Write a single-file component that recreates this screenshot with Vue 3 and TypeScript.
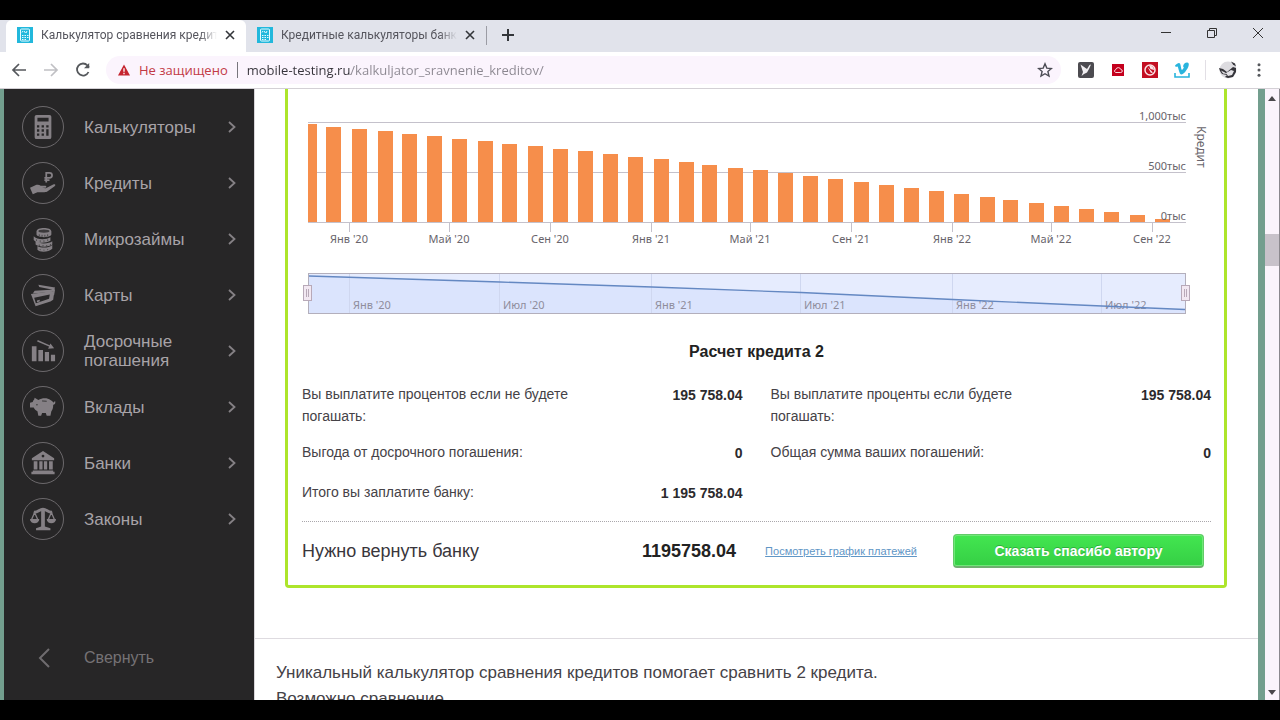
<script setup lang="ts">
import { ref } from 'vue'

interface Tab { title: string; active: boolean }
interface NavItem { label: string; icon: string }
interface Tick { x: number; label: string }
interface Summary { label: string; value: string }

const tabs: Tab[] = [
  { title: 'Калькулятор сравнения кредитов', active: true },
  { title: 'Кредитные калькуляторы банков', active: false },
]

const address = ref('mobile-testing.ru/kalkuljator_sravnenie_kreditov/')

const nav: NavItem[] = [
  { label: 'Калькуляторы', icon: 'calc' },
  { label: 'Кредиты', icon: 'hand' },
  { label: 'Микрозаймы', icon: 'coins' },
  { label: 'Карты', icon: 'cards' },
  { label: 'Досрочные погашения', icon: 'chart' },
  { label: 'Вклады', icon: 'pig' },
  { label: 'Банки', icon: 'bank' },
  { label: 'Законы', icon: 'scales' },
]

const barLefts = [
  326, 352, 378, 402, 427, 452, 478, 502, 528, 553, 578, 603, 628, 654, 679, 702, 728, 753,
  778, 803, 828, 854, 879, 904, 929, 954, 980, 1003, 1029, 1054, 1079, 1104, 1130, 1155,
]
const barTops = [
  127, 129, 131, 134, 136, 139, 141, 144, 146, 149, 151, 154, 157, 159, 162, 165, 168, 170,
  173, 176, 179, 182, 185, 188, 191, 194, 197, 200, 203, 206, 209, 212, 215, 219,
]
const baseline = 222
const bars = [
  { x: 308, y: 124, w: 9 },
  ...barLefts.map((x, i) => ({ x, y: barTops[i], w: 15 })),
]

const axisTicks: Tick[] = [
  { x: 349, label: "Янв '20" },
  { x: 449, label: "Май '20" },
  { x: 550, label: "Сен '20" },
  { x: 651, label: "Янв '21" },
  { x: 750, label: "Май '21" },
  { x: 851, label: "Сен '21" },
  { x: 952, label: "Янв '22" },
  { x: 1051, label: "Май '22" },
  { x: 1152, label: "Сен '22" },
]
const levels = [
  { y: 122, label: '1,000тыс' },
  { y: 172, label: '500тыс' },
  { y: 222, label: '0тыс' },
]
const rangeTicks: Tick[] = [
  { x: 349, label: "Янв '20" },
  { x: 499, label: "Июл '20" },
  { x: 651, label: "Янв '21" },
  { x: 800, label: "Июл '21" },
  { x: 952, label: "Янв '22" },
  { x: 1101, label: "Июл '22" },
]

const summary: Summary[] = [
  { label: 'Вы выплатите процентов если не будете погашать:', value: '195 758.04' },
  { label: 'Вы выплатите проценты если будете погашать:', value: '195 758.04' },
  { label: 'Выгода от досрочного погашения:', value: '0' },
  { label: 'Общая сумма ваших погашений:', value: '0' },
  { label: 'Итого вы заплатите банку:', value: '1 195 758.04' },
]
</script>

<template>
  <div class="window">
    <header class="tabstrip">
      <div v-for="t in tabs" :key="t.title" class="tab" :class="{ active: t.active }">
        <svg class="favicon" viewBox="0 0 16 16" aria-hidden="true">
          <rect width="16" height="16" fill="#22b8dc" />
          <rect x="3.5" y="2" width="9" height="12" rx="1" fill="none" stroke="#e6fbff" />
          <path d="M5 5.500l1-1.500M7 4l1.500 2M10 4l-1 2M5 8.500h1.500M7.500 8.500h1.500M10 8.500h1.500M5 10.500h1.500M7.500 10.500h1.500M10 10.500h1.500M5 12.500h1.500M7.500 12.500h1.500" stroke="#e6fbff" />
        </svg>
        <button class="tab-title">{{ t.title }}</button>
        <button class="tab-close" aria-label="Закрыть вкладку">
          <svg viewBox="0 0 12 12"><path d="M2 2l8 8M10 2l-8 8" stroke="#33363a" stroke-width="1.600" /></svg>
        </button>
      </div>
      <button class="new-tab" aria-label="Новая вкладка">
        <svg viewBox="0 0 12 12"><path d="M6 0v12M0 6h12" stroke="#33363a" stroke-width="2" /></svg>
      </button>
      <div class="win-controls">
        <button aria-label="Свернуть окно">
          <svg viewBox="0 0 12 12"><path d="M1 5.500h10" stroke="#333" /></svg>
        </button>
        <button aria-label="Восстановить окно">
          <svg viewBox="0 0 12 12" fill="none" stroke="#333"><path d="M1.500 3.500h7v7h-7zM3.500 3.500v-2h7v7h-2" /></svg>
        </button>
        <button aria-label="Закрыть окно">
          <svg viewBox="0 0 12 12"><path d="M1 1l10 10M11 1L1 11" stroke="#333" /></svg>
        </button>
      </div>
    </header>

    <div class="toolbar">
      <button class="tool" aria-label="Назад">
        <svg viewBox="0 0 16 16" fill="none" stroke="#55585c" stroke-width="1.700"><path d="M15 8H2M8 2L2 8l6 6" /></svg>
      </button>
      <button class="tool" aria-label="Вперёд">
        <svg viewBox="0 0 16 16" fill="none" stroke="#c0c0c4" stroke-width="1.700"><path d="M1 8h13M8 2l6 6-6 6" /></svg>
      </button>
      <button class="tool" aria-label="Обновить">
        <svg viewBox="0 0 16 16" fill="none" stroke="#55585c" stroke-width="1.800">
          <path d="M13.500 10a6 6 0 1 1-1-6.500L14 5.500" /><path d="M14.200 1v5.200H9z" fill="#55585c" stroke="none" />
        </svg>
      </button>
      <div class="omnibox">
        <svg class="warn" viewBox="0 0 12 12"><path d="M6 0.500L12 11.500H0z" fill="#c5242f" /><path d="M6 4.200v3.600M6 8.800v1.500" stroke="#fff" stroke-width="1.300" /></svg>
        <span class="insecure">Не защищено</span>
        <span class="divider"></span>
        <input v-model="address" class="address" type="text" aria-label="Адресная строка" spellcheck="false" />
        <button class="star" aria-label="Добавить в закладки">
          <svg viewBox="0 0 16 16" fill="none" stroke="#4c4c55" stroke-width="1.400"><path d="M8 1.800l1.800 4.300 4.600.4-3.500 3 1.100 4.600L8 11.700l-4 2.400 1.100-4.600-3.500-3 4.600-.4z" /></svg>
        </button>
      </div>
      <div class="extensions">
        <button class="tool" aria-label="Расширение «Колибри»">
          <svg viewBox="0 0 16 16"><rect width="16" height="16" rx="2" fill="#4c4b50" /><path d="M2.500 2.500l5 3.500 1.500 1 2.500-4 1.500-.5-2 4.500-2 3.500-3 1.500-2.500 2 1.500-4z" fill="#f1eff2" /></svg>
        </button>
        <button class="tool" aria-label="Расширение «Облако»">
          <svg viewBox="0 0 16 16"><rect x="2" y="2" width="12" height="12" fill="#c4001d" /><path d="M5.500 10.500h5.300a1.500 1.500 0 0 0 0-3 2.600 2.600 0 0 0-5 0 1.600 1.600 0 0 0-.3 3z" fill="none" stroke="#fbd7dc" /></svg>
        </button>
        <button class="tool" aria-label="Расширение «Трекер»">
          <svg viewBox="0 0 16 16"><rect width="16" height="16" fill="#c30f22" /><circle cx="8" cy="8" r="5" fill="none" stroke="#fbe4e6" stroke-width="1.500" /><path d="M7 3.500c3 0 5 2 5 4.500l-3.500-1zM5.500 5l5.500 5.500-2 .5z" fill="#fbe4e6" /></svg>
        </button>
        <button class="tool" aria-label="Расширение Vimeo">
          <svg viewBox="0 0 16 16"><path d="M1 3.500C3 1.500 5 .2 6 1.500c1 1.500.8 5 1.800 6.500C9 7.500 10.800 4.500 9 4.500c.5-2.800 2.300-4.200 4.300-4 2 .3 1.800 2.800.7 5-1.500 3-4.500 7-6.500 7C5 12.500 4.800 6 3.500 4.500c-.5-.2-1 .2-1.700.5z" fill="#29b4dd" /><path d="M1 11v4h14v-4" fill="none" stroke="#29b4dd" stroke-width="1.600" /></svg>
        </button>
        <span class="ext-divider"></span>
        <button class="tool avatar" aria-label="Профиль">
          <svg viewBox="0 0 18 18"><circle cx="9" cy="9" r="8.500" fill="#dddce0" /><path d="M0 7l4 1 4 3 6-5 3 1v4l-3 5-5 1-3-1 2-2-5-1-2-3z" fill="#35353a" /><path d="M2 9.500l4 2 2 1.500-4-.5zM7 12l5-3 3 1-2 4-4 1z" fill="#e4e3e7" /><path d="M12 .500l4 2 1 3-3-2z" fill="#35353a" /></svg>
        </button>
        <button class="tool" aria-label="Меню">
          <svg viewBox="0 0 16 16" fill="#55585c"><circle cx="8" cy="2.800" r="1.500" /><circle cx="8" cy="8" r="1.500" /><circle cx="8" cy="13.200" r="1.500" /></svg>
        </button>
      </div>
    </div>

    <div class="page">
      <aside class="sidebar">
        <nav>
          <a v-for="n in nav" :key="n.label" href="#" class="nav-item">
            <span class="ring">
              <svg viewBox="0 0 28 28" fill="#858085" aria-hidden="true">
                <g v-if="n.icon === 'calc'">
                  <path fill-rule="evenodd" d="M7 1h14a2 2 0 0 1 2 2v22a2 2 0 0 1-2 2H7a2 2 0 0 1-2-2V3a2 2 0 0 1 2-2zm1 3v4h12V4zM7.500 12v2.500h2.500V12zm5 0v2.500H15V12zm5 0v2.500H20V12zM7.500 16.500V19h2.500v-2.500zm5 0V19H15v-2.500zM7.500 21v2.500h2.500V21zm5 0v2.500H15V21zm5-4.500v7H20v-7z" />
                </g>
                <g v-else-if="n.icon === 'hand'">
                  <path d="M0 19l7-3c2-.5 3 0 4.500 1h5c1.500 0 1.500 2-.5 2.200h-3l4 .5 8-4.200c2-.8 3.200.5 1.500 2L19 23c-1 .6-2 1-3.500 1H8l-5 2z" />
                  <path d="M17.500 13.500V3H21a2.700 2.700 0 0 1 0 5.500h-5.500M15.500 11h5.500" fill="none" stroke="#858085" stroke-width="1.900" />
                </g>
                <g v-else-if="n.icon === 'coins'">
                  <path d="M7 6c0-5 16-5 16 0v3c0 4-16 4-16 0z" />
                  <path d="M4 11c3 4 14 4 18 1v4c-5 3-15 3-18-1zM6 16.500c4 3 14 3 18 0v3.500c-4 3-14 3-18 0zM8 21.500c4 2.500 12 2.500 16-1v4c-4 4-14 4-16 1z" />
                  <ellipse cx="15" cy="5.500" rx="6" ry="1.800" fill="#3b393b" />
                  <path d="M10 9v2M13 9.500v2M16 9.500v2M19 9v2M7 14.500v1.500M11 15.500v1.500M15 15.500v1.500M19 14.500v1.500M10 20v1.500M14 20.500v1.500M18 20.500v1.500M22 19.500v1.500M11 25v1M15 25.500v1M19 25v1" stroke="#333" stroke-width=".8" />
                </g>
                <g v-else-if="n.icon === 'cards'">
                  <path d="M9 3l18 3-1 2.500L10 5.500zM5 9.500l22-1.500-1 6-1.500.5.500-4-22 2z" />
                  <path fill-rule="evenodd" d="M1 13l22-3 3 1-1 8-3 2L6 26zm3.500 4l1.800 6L20.500 18l.8-4.500z" />
                  <path d="M7.500 20l3-1v2l-3 .8z" />
                </g>
                <g v-else-if="n.icon === 'chart'">
                  <path d="M2 9h5v16H2zM9 13h5v12H9zM16 15h4.500v10H16zM22.500 18H27v7h-4.500z" />
                  <path d="M8 3l14 6" stroke="#858085" stroke-width="1.600" /><path d="M22 6l4 5-6.500.5z" />
                </g>
                <g v-else-if="n.icon === 'pig'">
                  <path d="M5 4l4 2.500c4-2.500 10-2.500 13 0 2 1 3 2 3 3l2-2c1 3-1 4-2 4 0 4-1 6-2 7l-1 5h-4l-1-3h-4l-1 3H9l-1-5c-2-1-3-2-4-4H0v-5l3-1c0-1 1-2 1.500-2.500z" />
                  <path d="M13 7.500l5 .3" stroke="#333" /><circle cx="7.500" cy="11.500" r=".8" fill="#333" />
                </g>
                <g v-else-if="n.icon === 'bank'">
                  <path fill-rule="evenodd" d="M14 1l12 8v2H2V9zm0 4a1.500 1.500 0 1 0 0 3 1.500 1.500 0 0 0 0-3zM4 12h4v9H4zM10 12h3.500v9H10zM15 12h3.500v9H15zM20.500 12h4v9h-4zM3 22h22v1.500h1.500V26h-25v-2.500H3z" />
                </g>
                <g v-else>
                  <path d="M12 3h4v19l6 2v2H6.500v-2l5.500-2z" />
                  <path d="M4 6.500c4 1 6-3 10-3s6 4 10 3" fill="none" stroke="#858085" stroke-width="3" />
                  <path d="M5 7L1.500 15h7zM23 7l-3.500 8h7z" fill="none" stroke="#858085" stroke-width="1.400" />
                  <path d="M0 14h10c0 6-10 6-10 0zM18 14h10c0 6-10 6-10 0z" />
                </g>
              </svg>
            </span>
            <span class="nav-label">{{ n.label }}</span>
            <svg class="chevron" viewBox="0 0 8 14"><path d="M1 2l5.500 5L1 12" fill="none" stroke="#858185" stroke-width="1.800" /></svg>
          </a>
        </nav>
        <button class="collapse">
          <svg viewBox="0 0 12 20"><path d="M11 1L2 10l9 9" fill="none" stroke="#6f6c6f" stroke-width="2" /></svg>
          <span>Свернуть</span>
        </button>
      </aside>

      <main class="content">
        <section class="card">
          <svg class="plot" viewBox="288 89 936 240" role="img" aria-label="График остатка кредита">
            <g class="grid">
              <path v-for="l in levels" :key="l.y" :d="`M308 ${l.y}.5H1186`" />
            </g>
            <rect v-for="b in bars" :key="b.x" :x="b.x" :y="b.y" :width="b.w" :height="baseline - b.y" class="bar" />
            <g v-for="t in axisTicks" :key="t.x">
              <path :d="`M${t.x}.5 223v9`" class="tick" />
              <text :x="t.x" y="243" text-anchor="middle">{{ t.label }}</text>
            </g>
            <text v-for="l in levels" :key="l.label" x="1186" :y="l.y - 2" text-anchor="end">{{ l.label }}</text>
            <text transform="translate(1197 126) rotate(90)" class="axis-title">Кредит</text>

            <rect x="308.500" y="273.500" width="877" height="40" class="range" />
            <path d="M309 276L500 282 652 287 801 292.500 953 299.500 1102 306 1185 309.500V313H309z" class="range-area" />
            <g v-for="t in rangeTicks" :key="t.x">
              <path :d="`M${t.x}.5 274v39`" class="range-tick" />
              <text :x="t.x + 4" y="309" class="range-label">{{ t.label }}</text>
            </g>
            <path d="M309 276L500 282 652 287 801 292.500 953 299.500 1102 306 1185 309.500" class="range-line" />
            <g v-for="x in [303, 1181]" :key="x" class="handle">
              <rect :x="x + 0.5" y="285.500" width="8" height="15" />
              <path :d="`M${x + 3}.5 289v8M${x + 5}.5 289v8`" />
            </g>
          </svg>

          <div class="details">
            <h2>Расчет кредита 2</h2>
            <dl class="summary">
              <div v-for="s in summary" :key="s.label" class="pair">
                <dt>{{ s.label }}</dt>
                <dd>{{ s.value }}</dd>
              </div>
            </dl>
            <div class="total">
              <span class="total-label">Нужно вернуть банку</span>
              <strong>1195758.04</strong>
              <a href="#">Посмотреть график платежей</a>
              <button class="thanks">Сказать спасибо автору</button>
            </div>
          </div>
        </section>
        <article class="about">
          <p>Уникальный калькулятор сравнения кредитов помогает сравнить 2 кредита.</p>
          <p>Возможно сравнение</p>
        </article>
      </main>

      <div class="scrollbar" aria-hidden="true">
        <svg viewBox="0 0 8 5"><path d="M0 5l4-5 4 5z" fill="#4a474b" /></svg>
        <div class="track"><div class="thumb"></div></div>
        <svg viewBox="0 0 8 5"><path d="M0 0l4 5 4-5z" fill="#4a474b" /></svg>
      </div>
    </div>
  </div>
</template>

<style>
body {
  margin: 0;
  background: #000;
}
</style>

<style scoped>
* {
  box-sizing: border-box;
}
button {
  border: 0;
  padding: 0;
  background: none;
  font: inherit;
  color: inherit;
  cursor: pointer;
}
.window {
  display: flex;
  flex-direction: column;
  height: 100vh;
  padding: 20px 0;
  background: #000;
  font-family: "Liberation Sans", Arial, sans-serif;
  color: #454247;
}
.tabstrip {
  display: flex;
  flex: none;
  height: 32px;
  padding-left: 6px;
  background: #e1e3eb;
  font-family: Roboto, "Noto Sans", sans-serif;
}
.tab {
  display: flex;
  align-items: center;
  flex: 0 1 auto;
  width: 240px;
  min-width: 0;
  padding: 0 10px 2px 11px;
}
.tab.active {
  background: #fff;
  border-radius: 6px 6px 0 0;
}
.favicon {
  flex: none;
  width: 16px;
  height: 16px;
  margin-right: 8px;
}
.tab-title {
  flex: 1 1 0;
  min-width: 0;
  margin-right: 7px;
  overflow: hidden;
  white-space: nowrap;
  text-align: left;
  font-size: 12px;
  line-height: 18px;
  color: #55555d;
  mask-image: linear-gradient(to right, #000 90%, transparent);
}
.tab-close,
.tab-close svg {
  display: block;
  flex: none;
  width: 12px;
  height: 12px;
}
.new-tab {
  display: grid;
  place-items: center;
  width: 44px;
  padding-bottom: 2px;
  background: linear-gradient(#9b9ca4, #9b9ca4) 0 6px / 1px 19px no-repeat;
}
.new-tab svg {
  width: 12px;
  height: 12px;
}
.win-controls {
  display: flex;
  gap: 2px;
  margin-left: auto;
}
.win-controls button {
  display: grid;
  place-items: center;
  width: 44px;
  height: 25px;
}
.win-controls svg {
  width: 12px;
  height: 12px;
}
.toolbar {
  display: flex;
  align-items: center;
  flex: none;
  height: 37px;
  padding: 0 5px 0 3px;
  background: #fff;
  border-bottom: 1px solid #d3d0d5;
  font-family: "Open Sans", "Noto Sans", sans-serif;
}
.tool {
  display: grid;
  place-items: center;
  flex: none;
  width: 32px;
  height: 28px;
}
.tool svg {
  width: 16px;
  height: 16px;
}
.avatar {
  margin: 0 -1px 0 6px;
}
.avatar svg {
  width: 18px;
  height: 18px;
}
.omnibox {
  display: flex;
  align-items: center;
  flex: 1;
  height: 28px;
  margin: 0 9px 0 7px;
  padding: 0 8px 0 12px;
  background: #fbf4fd;
  border-radius: 14px;
}
.warn {
  width: 12px;
  height: 12px;
  margin-right: 9px;
}
.insecure {
  font-size: 13px;
  line-height: 20px;
  color: #c23a45;
}
.divider {
  width: 1px;
  height: 16px;
  margin: 0 9px;
  background: #77757c;
}
.address {
  flex: 1;
  min-width: 0;
  height: 22px;
  border: 0;
  padding: 0;
  outline: 0;
  background: linear-gradient(to right, #36343b 104px, #8b8790 104px);
  background-clip: text;
  color: transparent;
  caret-color: #36343b;
  font: 13px/20px "Open Sans", "Noto Sans", sans-serif;
}
.star {
  display: block;
  width: 16px;
  height: 16px;
}
.star svg {
  display: block;
}
.extensions {
  display: flex;
  align-items: center;
}
.ext-divider {
  width: 1px;
  height: 20px;
  margin-left: 7px;
  background: #e2dfe5;
}
.page {
  display: flex;
  flex: 1;
  min-height: 0;
  overflow: hidden;
  background: #739e8e;
}
.sidebar {
  display: flex;
  flex-direction: column;
  flex: none;
  width: 250px;
  margin-left: 4px;
  padding: 17px 18px 29px;
  background: #272627;
}
nav {
  display: grid;
  gap: 14px;
}
.nav-item {
  display: flex;
  align-items: center;
  height: 42px;
  color: #a8a3a8;
  font-size: 17px;
  line-height: 19px;
  text-decoration: none;
}
.ring {
  display: grid;
  place-items: center;
  flex: none;
  width: 42px;
  height: 42px;
  border: 1px solid #6c696c;
  border-radius: 50%;
}
.ring svg {
  width: 26px;
  height: 26px;
}
.nav-label {
  flex: 1;
  margin: 0 20px;
}
.chevron {
  width: 8px;
  height: 14px;
}
.collapse {
  display: flex;
  align-items: center;
  gap: 34px;
  margin-top: auto;
  padding-left: 16px;
  color: #757275;
  font-size: 16px;
  line-height: 26px;
}
.collapse svg {
  width: 12px;
  height: 20px;
}
.content {
  flex: 1;
  min-width: 0;
  background: #fff;
  border-left: 1px solid #d9d6da;
}
.card {
  margin: 0 31px 0 30px;
  border: 3px solid #ade52b;
  border-top: 0;
  border-radius: 0 0 4px 4px;
}
.plot {
  display: block;
  width: 100%;
  font-family: "Noto Sans", sans-serif;
  font-size: 11px;
}
.plot text {
  fill: #68646b;
}
.plot .axis-title {
  font-size: 12px;
}
.grid path,
.tick {
  stroke: #c4c1cb;
}
.bar {
  fill: #f68e4b;
}
.range {
  fill: #e6ecfe;
  stroke: #b3afbc;
}
.range-area {
  fill: #dbe4fd;
}
.range-tick {
  stroke: #cfd7f0;
}
.plot .range-label {
  fill: #8f8d9c;
}
.range-line {
  fill: none;
  stroke: #6488c2;
  stroke-width: 1.3;
}
.handle rect {
  fill: #f2e8f2;
  stroke: #b8a9b8;
}
.handle path {
  stroke: #b8a9b8;
}
.details {
  padding: 11px 13px 17px 14px;
}
h2 {
  margin: 0 0 19px;
  font-size: 16px;
  line-height: 24px;
  text-align: center;
  color: #222;
}
.summary {
  display: grid;
  grid-template-columns: 1fr 1fr;
  gap: 14px 28px;
  margin: 0 0 17px;
}
.pair {
  display: flex;
  justify-content: space-between;
  font-size: 14px;
  line-height: 22px;
}
.pair:last-child {
  margin-top: 3px;
}
.summary dt {
  max-width: 280px;
}
.summary dd {
  margin: 0;
  padding-top: 1px;
  font-weight: bold;
  color: #2c2a2d;
}
.total {
  display: flex;
  align-items: center;
  padding: 12px 7px 0 0;
  border-top: 1px dotted #aaa7ac;
}
.total-label {
  width: 340px;
  font-size: 18px;
  color: #39363b;
}
.total strong {
  font-size: 18px;
  color: #222;
}
.total a {
  margin-left: 29px;
  font-size: 11px;
  color: #5f96c6;
}
.thanks {
  width: 251px;
  height: 34px;
  margin-left: auto;
  border: 1px solid #62cb68;
  border-bottom: 2px solid #6fae70;
  border-radius: 4px;
  background: linear-gradient(#43e650, #35cf45);
  box-shadow: inset 0 0 0 1px #6fe878;
  color: #fff;
  font-size: 14px;
  font-weight: bold;
  text-shadow: 0 -1px 0 #2fae3d;
}
.about {
  margin-top: 50px;
  padding: 21px 21px 0;
  border-top: 1px solid #dedbe0;
  font-size: 17px;
  line-height: 26px;
}
.about p {
  margin: 0;
}
.scrollbar {
  display: flex;
  flex-direction: column;
  align-items: center;
  flex: none;
  width: 15px;
  margin-left: 7px;
  padding: 7px 0 5px;
  background: #fbf4fc;
  border-right: 1px solid #8b888e;
}
.scrollbar svg {
  flex: none;
  width: 8px;
  height: 5px;
}
.track {
  display: flex;
  flex: 1;
  flex-direction: column;
  width: 100%;
}
.track::before {
  content: "";
  flex: 132;
}
.track::after {
  content: "";
  flex: 422;
}
.thumb {
  flex: 32;
  background: #c8c2ca;
}
</style>
